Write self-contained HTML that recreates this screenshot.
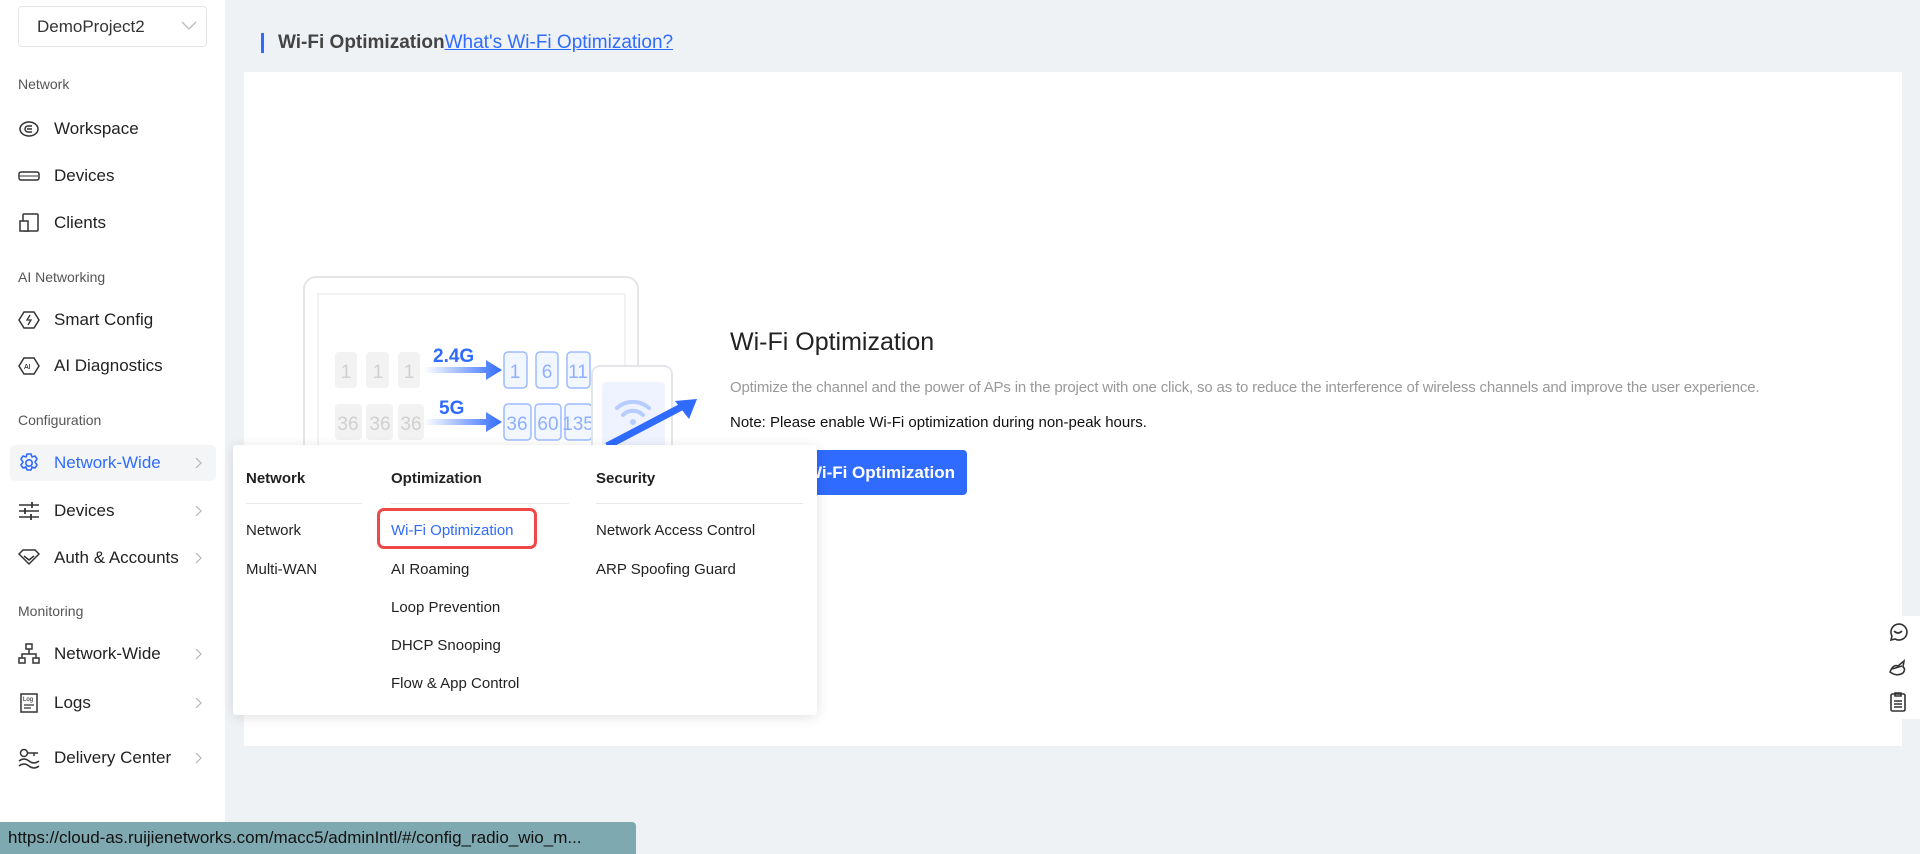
<!DOCTYPE html>
<html><head><meta charset="utf-8"><style>
*{box-sizing:border-box;margin:0;padding:0}
body{width:1920px;height:854px;overflow:hidden;background:#eff2f5;font-family:"Liberation Sans",sans-serif;position:relative;color:#222}
.abs{position:absolute}
.side{left:0;top:0;width:225px;height:854px;background:#fff}
.sel{left:18px;top:6px;width:189px;height:41px;border:1px solid #e3e5e8;border-radius:4px;font-size:17px;color:#333;padding:10px 0 0 18px}
.lab{left:18px;font-size:14px;color:#555}
.it{left:54px;font-size:17px;color:#222}
.ic{left:18px;width:22px;height:22px}
.chev{left:194px;width:8px;height:12px}
.dd{left:233px;top:445px;width:584px;height:270px;background:#fff;box-shadow:0 2px 12px rgba(0,0,0,.12);border-radius:3px}
.dd div{position:absolute;font-size:15px;color:#222}
.dh{font-weight:bold;top:25px}
</style></head><body>
<div class="abs side"></div>
<div class="abs sel">DemoProject2<svg class="abs" style="left:162px;top:14px" width="16" height="10"><path d="M1 1l7 7 7-7" fill="none" stroke="#bbb" stroke-width="1.3"/></svg></div>
<div class="abs lab" style="top:76px">Network</div>
<div class="abs lab" style="top:269px">AI Networking</div>
<div class="abs lab" style="top:412px">Configuration</div>
<div class="abs lab" style="top:603px">Monitoring</div>
<div class="abs" style="left:10px;top:445px;width:206px;height:36px;background:#f4f5f7;border-radius:5px"></div>
<svg class="abs ic" style="top:118px" viewBox="0 0 22 22"><ellipse cx="11" cy="11" rx="9" ry="7" fill="none" stroke="#333" stroke-width="1.5"/><path d="M14 8h-4a3 3 0 0 0 0 6h4M9 11h5" fill="none" stroke="#333" stroke-width="1.5"/></svg>
<div class="abs it" style="top:119px">Workspace</div>
<svg class="abs ic" style="top:165px" viewBox="0 0 22 22"><rect x="1" y="7" width="20" height="8" rx="2" fill="none" stroke="#333" stroke-width="1.5"/><path d="M2 11h18" stroke="#333"/></svg>
<div class="abs it" style="top:166px">Devices</div>
<svg class="abs ic" style="top:212px" viewBox="0 0 22 22"><rect x="5" y="2" width="15" height="17" rx="1" fill="none" stroke="#333" stroke-width="1.5"/><rect x="2" y="9" width="8" height="10" fill="#fff" stroke="#333" stroke-width="1.5"/></svg>
<div class="abs it" style="top:213px">Clients</div>
<svg class="abs ic" style="top:309px" viewBox="0 0 22 22"><path d="M6 3h10l5 8-5 8H6l-5-8z" fill="none" stroke="#333" stroke-width="1.5"/><path d="M12 6l-3 5h4l-3 5" fill="none" stroke="#333" stroke-width="1.3"/></svg>
<div class="abs it" style="top:310px">Smart Config</div>
<svg class="abs ic" style="top:355px" viewBox="0 0 22 22"><path d="M6 3h10l5 8-5 8H6l-5-8z" fill="none" stroke="#333" stroke-width="1.5"/><text x="6" y="14" font-size="7" font-family="Liberation Sans">AI</text></svg>
<div class="abs it" style="top:356px">AI Diagnostics</div>
<svg class="abs ic" style="top:452px" viewBox="0 0 22 22"><path d="M9 2h4l1 3 3-1 2 3-2 3 2 3-2 3-3-1-1 3H9l-1-3-3 1-2-3 2-3-2-3 2-3 3 1z" fill="none" stroke="#2f6bff" stroke-width="1.6" stroke-linejoin="round"/><circle cx="11" cy="11" r="3.2" fill="none" stroke="#2f6bff" stroke-width="1.6"/></svg>
<div class="abs it" style="top:453px;color:#2f6bff">Network-Wide</div>
<svg class="abs ic" style="top:500px" viewBox="0 0 22 22"><path d="M1 5h20M1 11h20M1 17h20" stroke="#333" stroke-width="1.5"/><path d="M14 2v6M7 8v6M13 14v6" stroke="#333" stroke-width="1.8"/></svg>
<div class="abs it" style="top:501px">Devices</div>
<svg class="abs ic" style="top:547px" viewBox="0 0 22 22"><path d="M1 7l4-4h12l4 4-10 10z" fill="none" stroke="#333" stroke-width="1.5"/><path d="M6 9l5 4 5-4" fill="none" stroke="#333" stroke-width="1.5"/></svg>
<div class="abs it" style="top:548px">Auth &amp; Accounts</div>
<svg class="abs ic" style="top:643px" viewBox="0 0 22 22"><rect x="8" y="1" width="6" height="5" fill="none" stroke="#333" stroke-width="1.5"/><rect x="1" y="15" width="6" height="5" fill="none" stroke="#333" stroke-width="1.5"/><rect x="15" y="15" width="6" height="5" fill="none" stroke="#333" stroke-width="1.5"/><path d="M11 6v5M4 15v-4h14v4" fill="none" stroke="#333" stroke-width="1.5"/></svg>
<div class="abs it" style="top:644px">Network-Wide</div>
<svg class="abs ic" style="top:692px" viewBox="0 0 22 22"><rect x="3" y="2" width="16" height="18" fill="none" stroke="#333" stroke-width="1.5"/><text x="5" y="9" font-size="6" font-family="Liberation Sans">Log</text><path d="M6 13h10M6 16h7" stroke="#333" stroke-width="1.3"/></svg>
<div class="abs it" style="top:693px">Logs</div>
<svg class="abs ic" style="top:747px" viewBox="0 0 22 22"><circle cx="6" cy="6" r="3.5" fill="none" stroke="#333" stroke-width="1.5"/><path d="M10 6h10M16 6v3M1 14q5-4 10 0t10 0M1 19q5-4 10 0t10 0" fill="none" stroke="#333" stroke-width="1.5"/></svg>
<div class="abs it" style="top:748px">Delivery Center</div>
<svg class="abs chev" style="top:457px" viewBox="0 0 8 12"><path d="M2 1l5 5-5 5" fill="none" stroke="#b5b5b5" stroke-width="1.2"/></svg>
<svg class="abs chev" style="top:505px" viewBox="0 0 8 12"><path d="M2 1l5 5-5 5" fill="none" stroke="#b5b5b5" stroke-width="1.2"/></svg>
<svg class="abs chev" style="top:552px" viewBox="0 0 8 12"><path d="M2 1l5 5-5 5" fill="none" stroke="#b5b5b5" stroke-width="1.2"/></svg>
<svg class="abs chev" style="top:648px" viewBox="0 0 8 12"><path d="M2 1l5 5-5 5" fill="none" stroke="#b5b5b5" stroke-width="1.2"/></svg>
<svg class="abs chev" style="top:697px" viewBox="0 0 8 12"><path d="M2 1l5 5-5 5" fill="none" stroke="#b5b5b5" stroke-width="1.2"/></svg>
<svg class="abs chev" style="top:752px" viewBox="0 0 8 12"><path d="M2 1l5 5-5 5" fill="none" stroke="#b5b5b5" stroke-width="1.2"/></svg>

<div class="abs" style="left:261px;top:33px;width:3px;height:20px;background:#2f6bff"></div>
<div class="abs" style="left:278px;top:32px;font-size:19px;font-weight:bold;color:#444">Wi-Fi Optimization<span style="font-weight:normal;color:#2f6bff;text-decoration:underline">What's Wi-Fi Optimization?</span></div>
<div class="abs" style="left:244px;top:72px;width:1658px;height:674px;background:#fff"></div>

<svg class="abs" style="left:290px;top:270px" width="430" height="200" viewBox="290 270 430 200">
<defs><linearGradient id="ag" x1="0" x2="1"><stop offset="0" stop-color="#2f6bff" stop-opacity="0"/><stop offset="1" stop-color="#2f6bff"/></linearGradient></defs>
<rect x="304" y="277" width="334" height="220" rx="12" fill="#fff" stroke="#e4e6ea" stroke-width="2"/>
<rect x="318" y="294" width="307" height="200" fill="#fff" stroke="#eceef1" stroke-width="1.5"/>
<g fill="#f2f2f2">
<rect x="335" y="352" width="22" height="36" rx="4"/><rect x="366" y="352" width="23" height="36" rx="4"/><rect x="398" y="352" width="22" height="36" rx="4"/>
<rect x="335" y="404" width="27" height="36" rx="4"/><rect x="366" y="404" width="27" height="36" rx="4"/><rect x="398" y="404" width="26" height="36" rx="4"/>
</g>
<g fill="#d0d0d0" font-family="Liberation Sans" font-size="19" text-anchor="middle">
<text x="346" y="378">1</text><text x="378" y="378">1</text><text x="409" y="378">1</text>
<text x="348" y="430">36</text><text x="380" y="430">36</text><text x="411" y="430">36</text></g>
<g fill="#f2f6ff" stroke="#9dbcff" stroke-width="1.5">
<rect x="504" y="352" width="23" height="36" rx="4"/><rect x="536" y="352" width="22" height="36" rx="4"/><rect x="567" y="352" width="23" height="36" rx="4"/>
<rect x="504" y="404" width="27" height="36" rx="4"/><rect x="535" y="404" width="26" height="36" rx="4"/><rect x="565" y="404" width="27" height="36" rx="4"/></g>
<g fill="#8fb0ff" font-family="Liberation Sans" font-size="19" text-anchor="middle">
<text x="515" y="378">1</text><text x="547" y="378">6</text><text x="578" y="378">11</text>
<text x="517" y="430">36</text><text x="548" y="430">60</text><text x="578" y="430">135</text></g>
<path d="M424 367h62v-7l16 10-16 10v-7h-62z" fill="url(#ag)"/>
<path d="M424 419h62v-7l16 10-16 10v-7h-62z" fill="url(#ag)"/>
<text x="433" y="362" font-family="Liberation Sans" font-size="19" font-weight="bold" fill="#2f6bff">2.4G</text>
<text x="439" y="414" font-family="Liberation Sans" font-size="19" font-weight="bold" fill="#2f6bff">5G</text>
<rect x="592" y="366" width="80" height="130" rx="8" fill="#fff" stroke="#e4e6ea" stroke-width="2"/>
<rect x="602" y="382" width="63" height="100" rx="4" fill="#eef3ff"/>
<g fill="none" stroke="#b8cdff" stroke-width="4" stroke-linecap="round"><path d="M617 408a24 24 0 0 1 32 0"/><path d="M623 415a14 14 0 0 1 20 0"/></g><circle cx="633" cy="422" r="3" fill="#b8cdff"/>
<path d="M607 446l80-42" stroke="#2f6bff" stroke-width="7"/><path d="M697 399l-22 2 14 18z" fill="#2f6bff"/>
</svg>

<div class="abs" style="left:730px;top:328px;font-size:25px;color:#222">Wi-Fi Optimization</div>
<div class="abs" style="left:730px;top:379px;font-size:15px;color:#999;letter-spacing:-0.17px">Optimize the channel and the power of APs in the project with one click, so as to reduce the interference of wireless channels and improve the user experience.</div>
<div class="abs" style="left:730px;top:414px;font-size:15px;color:#111">Note: Please enable Wi-Fi optimization during non-peak hours.</div>
<div class="abs" style="left:740px;top:450px;width:227px;height:45px;background:#2f6bff;border-radius:4px;color:#fff;font-weight:bold;font-size:17px;text-align:right;padding:13px 12px 0 0">Enable Wi-Fi Optimization</div>

<div class="abs dd">
<div class="dh" style="left:13px">Network</div><div class="dh" style="left:158px">Optimization</div><div class="dh" style="left:363px">Security</div>
<div style="left:13px;top:58px;width:116px;height:1px;background:#e8e8e8"></div>
<div style="left:158px;top:58px;width:178px;height:1px;background:#e8e8e8"></div>
<div style="left:363px;top:58px;width:207px;height:1px;background:#e8e8e8"></div>
<div style="left:13px;top:77px">Network</div><div style="left:13px;top:116px">Multi-WAN</div>
<div style="left:144px;top:63px;width:160px;height:41px;border:3px solid #f04848;border-radius:7px"></div>
<div style="left:158px;top:77px;color:#2f6bff">Wi-Fi Optimization</div>
<div style="left:158px;top:116px">AI Roaming</div><div style="left:158px;top:154px">Loop Prevention</div><div style="left:158px;top:192px">DHCP Snooping</div><div style="left:158px;top:230px">Flow &amp; App Control</div>
<div style="left:363px;top:77px">Network Access Control</div><div style="left:363px;top:116px">ARP Spoofing Guard</div>
</div>

<div class="abs" style="left:1876px;top:616px;width:44px;height:103px;background:#fff;border-radius:6px 0 0 6px"></div>
<svg class="abs" style="left:1886px;top:620px" width="24" height="96" viewBox="0 0 24 96">
<g fill="none" stroke="#333" stroke-width="1.6"><path d="M5 20l1-4a8 8 0 1 1 3 3z"/><path d="M8 11q4 4 8 0"/>
<path d="M4 52q3-8 8-6l6-5-1 6q3 2 0 6-6 4-13-1z"/><path d="M6 49l10-3"/>
<rect x="5" y="74" width="14" height="17" rx="1.5"/><path d="M9 73h6v3H9zM8 81h8M8 84h8M8 87h8"/></g></svg>

<div class="abs" style="left:0;top:822px;width:636px;height:32px;background:#7fa9b0;border-radius:0 4px 0 0;font-size:17px;color:#111;padding:6px 0 0 8px;white-space:nowrap;overflow:hidden">https://cloud-as.ruijienetworks.com/macc5/adminIntl/#/config_radio_wio_m...</div>
</body></html>
